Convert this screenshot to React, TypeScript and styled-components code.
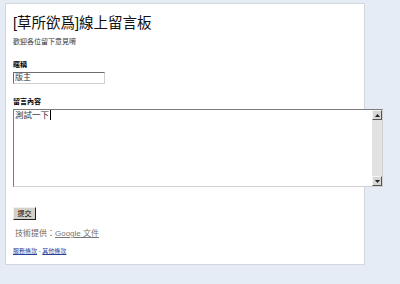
import React from "react";
import styled, { createGlobalStyle } from "styled-components";

const GlobalStyle = createGlobalStyle`
  html, body {
    margin: 0;
    padding: 0;
    background: #e6ecf6;
  }
  body {
    font-family: "Liberation Sans", "Noto Sans CJK TC", sans-serif;
    width: 400px;
    height: 284px;
    overflow: hidden;
  }
`;

const Page = styled.div`
  padding: 3px 0 0 5px;
`;

const FormCard = styled.div`
  width: 351px;
  height: 260px;
  background: #fff;
  border: 1px solid #d3d6db;
  padding: 0 0 0 7px;
  box-sizing: content-box;
`;

const Title = styled.h1`
  margin: 0;
  padding-top: 10px;
  font-size: 14.5px;
  line-height: 18px;
  font-weight: normal;
  color: #111;
`;

const Subtitle = styled.p`
  margin: 5px 0 0;
  font-size: 7px;
  line-height: 9px;
  color: #333;
`;

const Field = styled.div<{ $gap: number }>`
  margin-top: ${(p) => p.$gap}px;
  display: flex;
  flex-direction: column;
  align-items: flex-start;
`;

const Label = styled.label`
  font-size: 7px;
  line-height: 9px;
  font-weight: bold;
  color: #000;
  margin-bottom: 3px;
`;

const TextInput = styled.div`
  width: 89px;
  height: 10px;
  border-style: solid;
  border-width: 1px;
  border-color: #6d6d6d #d0d0d0 #d0d0d0 #6d6d6d;
  font-size: 8px;
  line-height: 10px;
  padding-left: 1px;
  color: #333;
`;

const MessageBox = styled.div`
  width: 368px;
  height: 76px;
  display: flex;
  background: #fff;
  position: relative;
  border-style: solid;
  border-width: 1px;
  border-color: #7a7a7a #d0d0d0 #d0d0d0 #7a7a7a;
`;

const MessageText = styled.div`
  flex: 1;
  font-size: 8.5px;
  line-height: 11px;
  padding-left: 1px;
  color: #333;
`;

const Caret = styled.span`
  display: inline-block;
  width: 1px;
  height: 10px;
  background: #000;
  vertical-align: -2px;
  margin-left: 1px;
`;

const Scrollbar = styled.div`
  width: 10px;
  display: flex;
  flex-direction: column;
  justify-content: space-between;
  background: #e2e2e2;
`;

const ScrollButton = styled.div`
  height: 10px;
  box-sizing: border-box;
  background: #d6d6d6;
  border-style: solid;
  border-width: 1px;
  border-color: #f4f4f4 #555 #555 #f4f4f4;
  display: flex;
  align-items: center;
  justify-content: center;
`;

const SubmitButton = styled.button`
  margin-top: 20px;
  width: 23px;
  height: 13px;
  padding: 0;
  font-family: inherit;
  font-size: 7px;
  line-height: 9px;
  color: #000;
  background: #d4d0c8;
  border-style: solid;
  border-width: 1px;
  border-color: #f0f0f0 #222 #222 #f0f0f0;
  display: block;
`;

const PoweredBy = styled.div`
  margin: 9px 0 0 2px;
  font-size: 8px;
  line-height: 10px;
  color: #666;
  a {
    color: #777;
    text-decoration: underline;
  }
`;

const FooterLinks = styled.div`
  margin-top: 8px;
  font-size: 6px;
  line-height: 8px;
  color: #333;
  a {
    color: #2a3f9a;
    text-decoration: underline;
  }
`;

const Arrow = ({ up }: { up?: boolean }) => (
  <svg width="5" height="3" viewBox="0 0 5 3">
    <path d={up ? "M0 3 L2.5 0 L5 3 Z" : "M0 0 L2.5 3 L5 0 Z"} fill="#222" />
  </svg>
);

export default function App() {
  return (
    <>
      <GlobalStyle />
      <Page>
        <FormCard>
          <Title>[草所欲爲]線上留言板</Title>
          <Subtitle>歡迎各位留下意見唷</Subtitle>

          <Field $gap={14}>
            <Label>暱稱</Label>
            <TextInput>版主</TextInput>
          </Field>

          <Field $gap={13}>
            <Label>留言內容</Label>
            <MessageBox>
              <MessageText>
                測試一下
                <Caret />
              </MessageText>
              <Scrollbar>
                <ScrollButton>
                  <Arrow up />
                </ScrollButton>
                <ScrollButton>
                  <Arrow />
                </ScrollButton>
              </Scrollbar>
            </MessageBox>
          </Field>

          <SubmitButton type="submit">提交</SubmitButton>

          <PoweredBy>
            技術提供：<a href="#">Google 文件</a>
          </PoweredBy>

          <FooterLinks>
            <a href="#">服務條款</a> - <a href="#">其他條款</a>
          </FooterLinks>
        </FormCard>
      </Page>
    </>
  );
}
